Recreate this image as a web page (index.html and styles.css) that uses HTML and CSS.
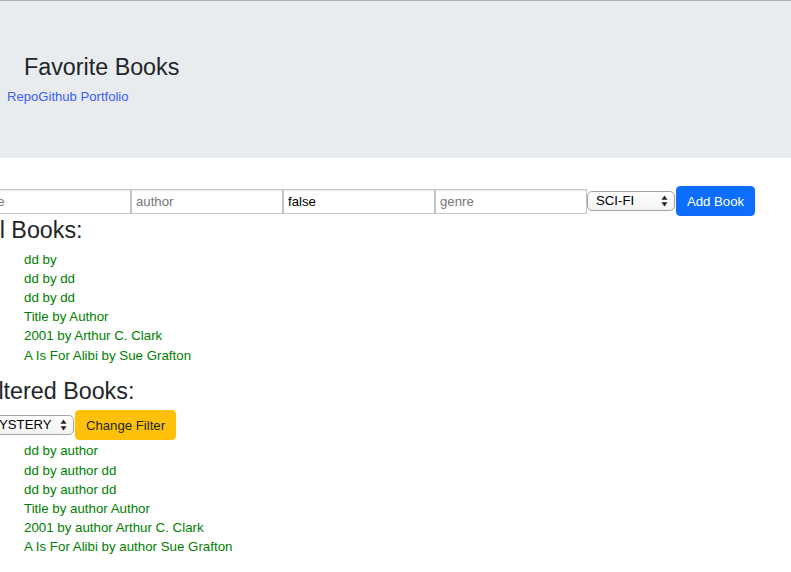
FILE: index.html
```html
<!DOCTYPE html>
<html>
<head>
<meta charset="utf-8">
<title>Favorite Books</title>
<link rel="stylesheet" href="styles.css">
</head>
<body>
<header class="jumbotron">
  <h1 class="title">Favorite Books</h1>
  <a class="repo-link" href="#">RepoGithub Portfolio</a>
</header>
<main class="main">
  <form class="book-form">
    <input class="field" type="text" placeholder="title">
    <input class="field" type="text" placeholder="author">
    <input class="field" type="text" value="false">
    <input class="field" type="text" placeholder="genre">
    <span class="select-wrap select-genre">
      <select class="select">
        <option>SCI-FI</option>
        <option>MYSTERY</option>
      </select>
      <svg class="select-arrows" width="7" height="12" viewBox="0 0 7 12"><path d="M3.5 0.5 L6.5 4.8 L0.5 4.8 Z M3.5 11.5 L6.5 7.2 L0.5 7.2 Z" fill="#222"/></svg>
    </span>
    <button class="btn btn-primary" type="button">Add Book</button>
  </form>
  <h2 class="section-title">All Books:</h2>
  <ul class="book-list">
    <li>dd by</li>
    <li>dd by dd</li>
    <li>dd by dd</li>
    <li>Title by Author</li>
    <li>2001 by Arthur C. Clark</li>
    <li>A Is For Alibi by Sue Grafton</li>
  </ul>
  <h2 class="section-title">Filtered Books:</h2>
  <div class="filter-row">
    <span class="select-wrap select-filter">
      <select class="select">
        <option>MYSTERY</option>
        <option>SCI-FI</option>
      </select>
      <svg class="select-arrows" width="7" height="12" viewBox="0 0 7 12"><path d="M3.5 0.5 L6.5 4.8 L0.5 4.8 Z M3.5 11.5 L6.5 7.2 L0.5 7.2 Z" fill="#222"/></svg>
    </span>
    <button class="btn btn-warning" type="button">Change Filter</button>
  </div>
  <ul class="book-list">
    <li>dd by author</li>
    <li>dd by author dd</li>
    <li>dd by author dd</li>
    <li>Title by author Author</li>
    <li>2001 by author Arthur C. Clark</li>
    <li>A Is For Alibi by author Sue Grafton</li>
  </ul>
</main>
</body>
</html>
```
FILE: styles.css
```css
html, body {
  margin: 0;
  padding: 0;
}
body {
  font-family: "Liberation Sans", Arial, Helvetica, sans-serif;
  font-size: 13px;
  line-height: 19.2px;
  color: #212529;
  background: #fff;
  overflow: hidden;
}
.jumbotron {
  border-top: 1px solid #b0b0b0;
  background: #e9ecef;
  height: 158px;
  box-sizing: border-box;
  padding: 53px 0 0 7px;
}
.title {
  margin: 0 0 5px 17px;
  font-size: 23.3px;
  line-height: 27.6px;
  font-weight: 400;
  color: #212529;
}
.repo-link {
  display: block;
  font-size: 13.1px;
  line-height: 19.2px;
  color: #3b5bfd;
  text-decoration: none;
}
.main {
  margin-left: -21px;
  padding-top: 28px;
}
.book-form {
  display: flex;
  align-items: center;
  height: 30px;
  margin: 0 0 1px 0;
}
.field {
  box-sizing: border-box;
  width: 152px;
  height: 25px;
  margin: 0;
  padding: 0 4px;
  border: 1px solid #c6c6c6;
  box-shadow: inset 0 1px 1px rgba(0,0,0,0.08);
  font-family: "Liberation Sans", Arial, sans-serif;
  font-size: 13.2px;
  color: #000;
  background: #fff;
  outline: none;
}
.field::placeholder {
  color: #777;
}
.select-wrap {
  position: relative;
  display: inline-block;
  height: 20px;
}
.select {
  appearance: none;
  -webkit-appearance: none;
  box-sizing: border-box;
  height: 20px;
  margin: 0;
  padding: 0 0 0 8px;
  border: 1px solid #a3a3a3;
  border-radius: 5px;
  background: linear-gradient(#ffffff, #f3f3f3);
  font-family: "Liberation Sans", Arial, sans-serif;
  font-size: 13.2px;
  line-height: 18px;
  color: #000;
  outline: none;
}
.select-genre .select {
  width: 88px;
}
.select-filter .select {
  width: 95px;
}
.select-arrows {
  position: absolute;
  right: 7px;
  top: 4px;
  pointer-events: none;
}
.btn {
  box-sizing: border-box;
  height: 30px;
  margin: 0 0 0 1px;
  border: 1px solid transparent;
  border-radius: 4px;
  font-family: "Liberation Sans", Arial, sans-serif;
  font-size: 13.2px;
  line-height: 19px;
  cursor: pointer;
}
.btn-primary {
  width: 79px;
  background: #0d6efd;
  border-color: #0d6efd;
  color: #fff;
}
.btn-warning {
  width: 101px;
  background: #ffc107;
  border-color: #ffc107;
  color: #212529;
}
.section-title {
  margin: 0 0 5px 0;
  font-size: 23.3px;
  line-height: 27.6px;
  font-weight: 400;
  color: #212529;
}
.book-list {
  list-style: none;
  margin: 0 0 13px 0;
  padding: 0 0 0 45px;
  color: #008000;
}
.book-list li {
  font-size: 13.3px;
  line-height: 19.2px;
}
.filter-row {
  display: flex;
  align-items: center;
  height: 30px;
  margin: 2px 0 1px 0;
}
```
